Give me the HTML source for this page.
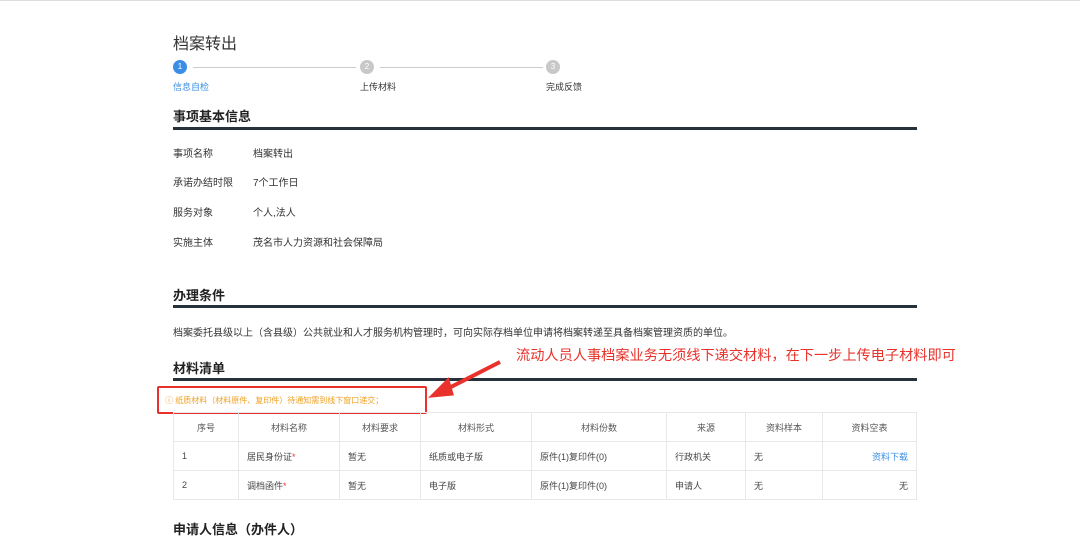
<!DOCTYPE html><html><head><meta charset="utf-8"><style>
body{margin:0;width:1080px;height:528px;overflow:hidden;background:#fff;font-family:"Liberation Sans","Noto Sans CJK SC",sans-serif;color:#333;position:relative}
.a{position:absolute;white-space:nowrap}
.s{font-size:10px}
.h{font-size:13px;font-weight:bold;color:#222}
.bar{position:absolute;left:173px;width:744px;height:3px;background:#27313b}
.c{position:absolute;width:14px;height:14px;border-radius:50%;color:#fff;font-size:8px;text-align:center;line-height:14px}
table{position:absolute;left:173px;top:412px;width:744px;border-collapse:collapse;font-size:9px;color:#444}
td{border:1px solid #e8e8e8;height:28px;padding:0 8px}
tr:first-child td{text-align:center;color:#555}
</style></head><body>
<div class="a" style="left:0;top:0;width:1080px;height:1px;background:#ddd"></div>
<div class="a" style="left:173px;top:30px;font-size:16px;color:#333">档案转出</div>
<div class="a" style="left:193px;top:67px;width:163px;height:1px;background:#ccc"></div>
<div class="a" style="left:380px;top:67px;width:163px;height:1px;background:#ccc"></div>
<div class="c" style="left:173px;top:60px;background:#3a8ee6">1</div>
<div class="c" style="left:360px;top:60px;background:#c8c8c8">2</div>
<div class="c" style="left:546px;top:60px;background:#c8c8c8">3</div>
<div class="a s" style="left:173px;top:80px;color:#3a8ee6;font-size:9px">信息自检</div>
<div class="a s" style="left:360px;top:80px;font-size:9px">上传材料</div>
<div class="a s" style="left:546px;top:80px;font-size:9px">完成反馈</div>
<div class="a h" style="left:173px;top:106px">事项基本信息</div>
<div class="bar" style="top:127px"></div>
<div class="a s" style="left:173px;top:145px">事项名称</div><div class="a s" style="left:253px;top:145px">档案转出</div>
<div class="a s" style="left:173px;top:174px">承诺办结时限</div><div class="a s" style="left:253px;top:174px">7个工作日</div>
<div class="a s" style="left:173px;top:204px">服务对象</div><div class="a s" style="left:253px;top:204px">个人,法人</div>
<div class="a s" style="left:173px;top:234px">实施主体</div><div class="a s" style="left:253px;top:234px">茂名市人力资源和社会保障局</div>
<div class="a h" style="left:173px;top:285px">办理条件</div>
<div class="bar" style="top:305px"></div>
<div class="a s" style="left:173px;top:324px">档案委托县级以上（含县级）公共就业和人才服务机构管理时，可向实际存档单位申请将档案转递至具备档案管理资质的单位。</div>
<div class="a h" style="left:173px;top:358px">材料清单</div>
<div class="bar" style="top:378px"></div>
<div class="a" style="left:516px;top:345px;font-size:14.2px;color:#e8322b">流动人员人事档案业务无须线下递交材料，在下一步上传电子材料即可</div>
<svg class="a" style="left:0;top:0" width="1080" height="528"><path d="M500 362 L445 390" stroke="#e8322b" stroke-width="4"/><path d="M432 396 L448 380 L452 394 Z" fill="#e8322b" stroke="#e8322b" stroke-width="3"/></svg>
<div class="a" style="left:157px;top:386px;width:266px;height:24px;border:2px solid #e8322b;border-radius:2px"></div>
<div class="a" style="left:165px;top:395px;font-size:8px;color:#f0a020">ⓘ 纸质材料（材料原件、复印件）待通知需到线下窗口递交；</div>
<table>
<tr><td style="width:48px">序号</td><td style="width:84px">材料名称</td><td style="width:64px">材料要求</td><td style="width:94px">材料形式</td><td style="width:118px">材料份数</td><td style="width:62px">来源</td><td style="width:60px">资料样本</td><td>资料空表</td></tr>
<tr><td>1</td><td>居民身份证<span style="color:#e33">*</span></td><td>暂无</td><td>纸质或电子版</td><td>原件(1)复印件(0)</td><td>行政机关</td><td>无</td><td style="text-align:right;color:#3a8ee6">资料下载</td></tr>
<tr><td>2</td><td>调档函件<span style="color:#e33">*</span></td><td>暂无</td><td>电子版</td><td>原件(1)复印件(0)</td><td>申请人</td><td>无</td><td style="text-align:right">无</td></tr>
</table>
<div class="a h" style="left:173px;top:519px">申请人信息（办件人）</div>
</body></html>
